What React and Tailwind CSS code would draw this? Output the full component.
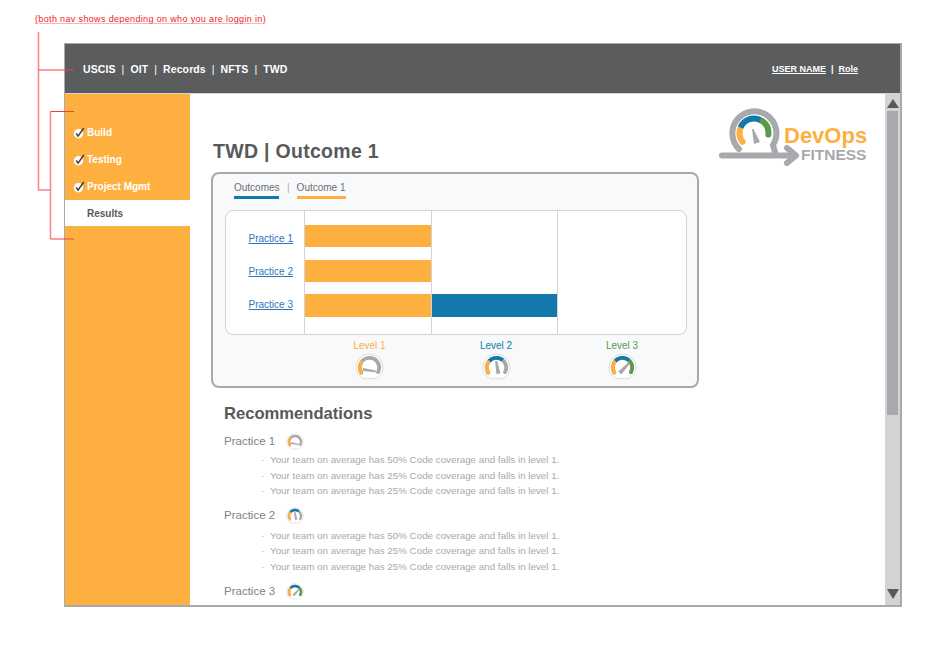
import React from 'react';

const ORANGE = '#fdb040';
const BLUE = '#1279ad';
const GREEN = '#5b9a46';
const GRAY = '#a7a9ac';

const polar = (cx, cy, r, deg) => {
  const a = ((deg - 90) * Math.PI) / 180;
  return [cx + r * Math.cos(a), cy + r * Math.sin(a)];
};

const arc = (cx, cy, r, from, to) => {
  const [x1, y1] = polar(cx, cy, r, from);
  const [x2, y2] = polar(cx, cy, r, to);
  const large = to - from > 180 ? 1 : 0;
  return `M${x1} ${y1}A${r} ${r} 0 ${large} 1 ${x2} ${y2}`;
};

const Gauge = ({ level, size = 30 }) => {
  const needle = {
    1: 'M8.500 15.500L21.500 18L21.500 20L8 18.500Z',
    2: 'M13.500 8.500L15.800 8.200L19 21L15 22Z',
    3: 'M21 9.500L22.500 11L14 22L10.500 19.500Z',
  }[level];
  return (
    <svg width={size} height={size} viewBox="0 0 30 30" className="block shrink-0">
      <path
        d="M8 26C3.500 23.500 1 19.500 1 15A14 14 0 0 1 29 15C29 19.500 26.500 23.500 22 26C19 27.800 18 26 15 26C12 26 11 27.800 8 26Z"
        fill="#fff"
        stroke="#d8d9db"
        strokeWidth="1"
      />
      <path d={arc(15, 15, 10, -122, 118)} fill="none" stroke={GRAY} strokeWidth="4" strokeLinecap="round" />
      {level >= 3 && <path d={arc(15, 15, 10, 42, 118)} fill="none" stroke={GREEN} strokeWidth="4" strokeLinecap="round" />}
      {level >= 2 && <path d={arc(15, 15, 10, -50, 40)} fill="none" stroke={BLUE} strokeWidth="4" />}
      <path d={arc(15, 15, 10, -122, -58)} fill="none" stroke={ORANGE} strokeWidth="4" strokeLinecap="round" />
      <path d={needle} fill={GRAY} />
    </svg>
  );
};

const Check = () => (
  <svg width="12" height="12" viewBox="0 0 12 12" className="shrink-0">
    <circle cx="5.500" cy="6.800" r="4.700" fill="#fff" />
    <path d="M3.200 6.400L5 9.200L10.800 1" fill="none" stroke="#414042" strokeWidth="1.500" />
  </svg>
);

const Logo = () => (
  <div className="relative w-[150px] h-[58px]">
    <svg width="150" height="58" viewBox="0 0 150 58" className="block">
      <path d="M20 41A22 22 0 1 1 54 37L56 44" fill="none" stroke={GRAY} strokeWidth="6" strokeLinecap="round" />
      <path d="M3 47.500H74" fill="none" stroke={GRAY} strokeWidth="6" strokeLinecap="round" />
      <path d="M68 40L77 47.500L68 55" fill="none" stroke={GRAY} strokeWidth="6" strokeLinecap="round" strokeLinejoin="round" />
      <path d={arc(35, 25, 14.500, -128, -76)} fill="none" stroke={ORANGE} strokeWidth="6" strokeLinecap="round" />
      <path d={arc(35, 25, 14.500, -68, 34)} fill="none" stroke={BLUE} strokeWidth="6" />
      <path d={arc(35, 25, 14.500, 36, 96)} fill="none" stroke={GREEN} strokeWidth="6" strokeLinecap="round" />
      <path d="M33 21L34.500 21L41 34L35 36Z" fill={GRAY} />
    </svg>
    <span className="absolute left-[65px] top-[18px] text-[22px] leading-[20px] font-bold text-[#fdb040]">DevOps</span>
    <span className="absolute left-[82px] top-[41px] text-[15.500px] leading-[12px] font-bold text-[#a7a9ac]">FITNESS</span>
  </div>
);

const practices = [
  { name: 'Practice 1', level: 1, gap: 'mb-[7px]', top: '', lines: ['50%', '25%', '25%'] },
  { name: 'Practice 2', level: 2, gap: 'mb-[8px]', top: 'mt-[2px]', lines: ['50%', '25%', '25%'] },
  { name: 'Practice 3', level: 3, gap: '', top: '', lines: [] },
];

const rows = ['Practice 1', 'Practice 2', 'Practice 3'];

const levels = [
  { label: 'Level 1', level: 1, color: 'text-[#fdb040]', width: 'w-[127px]' },
  { label: 'Level 2', level: 2, color: 'text-[#1279ad]', width: 'w-[126px]' },
  { label: 'Level 3', level: 3, color: 'text-[#5b9a46]', width: 'w-[126px]' },
];

const App = () => (
  <div className="relative w-[935px] h-[650px] bg-white overflow-hidden font-['Liberation_Sans',sans-serif]">
    <p className="pl-[35px] pt-[13px] h-[43px] text-[9px] leading-[12px] text-[#ed1c24] tracking-[0.35px]">
      <span className="underline decoration-[#f9b4b8]">(both nav shows depending on who you are loggin in)</span>
    </p>

    <div className="ml-[64px] w-[838px] h-[564px] border-2 border-[#a7a9ac] border-l border-t flex flex-col">
      {/* Top nav */}
      <header className="h-[49px] shrink-0 bg-[#5a5c5d] flex items-center justify-between pt-[3px] pl-[18px] pr-[42px] text-white">
        <nav className="flex items-center text-[10.500px] font-bold tracking-[0.1px]">
          <span>USCIS</span>
          <span className="px-[6px] font-normal">|</span>
          <span>OIT</span>
          <span className="px-[6px] font-normal">|</span>
          <span>Records</span>
          <span className="px-[6px] font-normal">|</span>
          <span>NFTS</span>
          <span className="px-[6px] font-normal">|</span>
          <span>TWD</span>
        </nav>
        <div className="flex items-center text-[9px] font-bold">
          <span className="underline">USER NAME</span>
          <span className="px-[5px]">|</span>
          <span className="underline">Role</span>
        </div>
      </header>

      <div className="flex-1 flex min-h-0 border-t border-[#d1d3d4]">
        {/* Side nav */}
        <aside className="w-[125px] shrink-0 bg-[#fdb040] pt-[25px] text-[10px]">
          {['Build', 'Testing', 'Project Mgmt'].map((item) => (
            <div key={item} className="h-[27px] flex items-center pl-[8px] gap-[2px] font-bold text-white">
              <Check />
              <span>{item}</span>
            </div>
          ))}
          <div className="h-[26px] flex items-center pl-[22px] bg-white font-bold text-[#58595b]">Results</div>
        </aside>

        {/* Main */}
        <main className="flex-1 min-w-0 flex overflow-hidden">
          <div className="w-[509px] shrink-0 pl-[21px]">
            <h1 className="mt-[44px] ml-[2px] h-[26px] text-[19.500px] leading-[26px] font-bold text-[#58595b] tracking-[0.3px]">TWD | Outcome 1</h1>

            <section className="mt-[8px] h-[216px] w-[488px] border-2 border-[#a7a9ac] rounded-[8px] bg-[#f8f9fb] px-[12px]">
              <div className="flex items-start h-[36px] pt-[8px] pl-[9px] text-[10px] leading-[12px] text-[#6d6e71]">
                <span className="border-b-[3px] border-[#1279ad] pb-[2px] w-[45px]">Outcomes</span>
                <span className="ml-[8px] mr-[7px] text-[#a7a9ac]">|</span>
                <span className="border-b-[3px] border-[#fdb040] pb-[2px] w-[49px]">Outcome 1</span>
              </div>

              <div className="h-[125px] w-[462px] border border-[#d1d3d4] rounded-[8px] bg-white flex overflow-hidden">
                <div className="w-[79px] shrink-0 border-r border-[#d1d3d4] pt-[11px]">
                  {rows.map((name) => (
                    <div key={name} className="h-[33px] flex items-center justify-end pr-[11px]">
                      <a className="text-[10px] text-[#2f75bb] underline">{name}</a>
                    </div>
                  ))}
                </div>
                <div className="flex-1 grid grid-cols-[127px_126px_1fr]">
                  <div className="border-r border-[#d1d3d4] pt-[14px]">
                    <div className="h-[22px] bg-[#fdb040]" />
                    <div className="h-[22px] mt-[13px] bg-[#fdb040]" />
                    <div className="h-[23px] mt-[12px] bg-[#fdb040]" />
                  </div>
                  <div className="border-r border-[#d1d3d4] pt-[83px]">
                    <div className="h-[23px] bg-[#1279ad]" />
                  </div>
                  <div />
                </div>
              </div>

              <div className="flex pl-[81px] pt-[5px]">
                {levels.map((l) => (
                  <div key={l.label} className={`${l.width} flex flex-col items-center`}>
                    <span className={`text-[10px] leading-[12px] ${l.color}`}>{l.label}</span>
                    <div className="mt-[1px]">
                      <Gauge level={l.level} size={29} />
                    </div>
                  </div>
                ))}
              </div>
            </section>

            <section className="pl-[13px] pt-[15px]">
              <h2 className="h-[22px] text-[16.600px] leading-[22px] font-bold text-[#58595b]">Recommendations</h2>
              <div className="mt-[7px]">
                {practices.map((p) => (
                  <div key={p.name} className={p.gap}>
                    <div className="flex items-center h-[20px] gap-[9px] text-[11.500px] text-[#808285]">
                      <span className="w-[53px] whitespace-nowrap">{p.name}</span>
                      <Gauge level={p.level} size={18} />
                    </div>
                    <div className={p.top}>
                      {p.lines.map((pct, i) => (
                        <div key={i} className="h-[15.500px] leading-[15.500px] pl-[37px] text-[9.800px] text-[#a7a9ac] flex items-center whitespace-nowrap">
                          <span className="w-[9px]">·</span>
                          <span>Your team on average has {pct} Code coverage and falls in level 1.</span>
                        </div>
                      ))}
                    </div>
                  </div>
                ))}
              </div>
            </section>
          </div>

          <div className="pl-[20px] pt-[14px]">
            <Logo />
          </div>
        </main>

        {/* Scrollbar */}
        <div className="w-[15px] shrink-0 bg-[#d1d3d4] flex flex-col items-center pt-[5px] pb-[6px]">
          <div className="w-0 h-0 border-l-[6px] border-r-[6px] border-b-[9px] border-l-transparent border-r-transparent border-b-[#58595b]" />
          <div className="w-[11px] h-[304px] mt-[3px] bg-[#a7a9ac]" />
          <div className="mt-auto w-0 h-0 border-l-[6px] border-r-[6px] border-t-[10px] border-l-transparent border-r-transparent border-t-[#58595b]" />
        </div>
      </div>
    </div>

    {/* Red annotation brackets */}
    <svg width="80" height="250" viewBox="0 0 80 250" className="absolute left-0 top-0 pointer-events-none">
      <path d="M38.500 32V190H50.500" fill="none" stroke="#f9838a" strokeWidth="1.500" />
      <path d="M50.500 111.500V239" fill="none" stroke="#f9838a" strokeWidth="1.500" />
      <path d="M38.500 70H74M50.500 111.500H74M50.500 239H74" fill="none" stroke="#ef4136" strokeWidth="1" />
    </svg>
  </div>
);

export default App;
